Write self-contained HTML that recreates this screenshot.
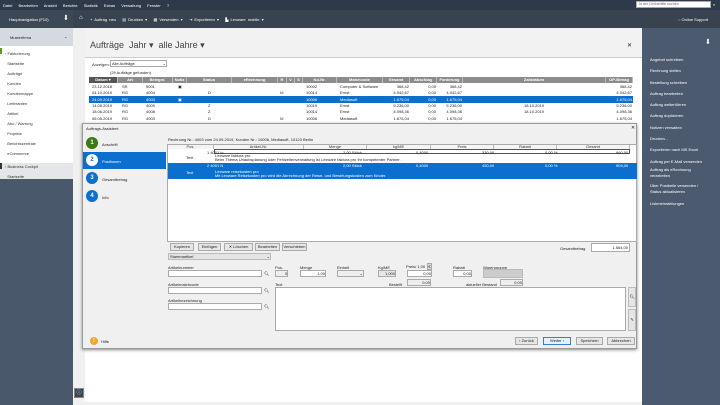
<!DOCTYPE html><html><head><meta charset="utf-8"><style>
*{margin:0;padding:0;box-sizing:border-box}
body{width:720px;height:405px;overflow:hidden;position:relative;background:#f0f0f0;font-family:"Liberation Sans",sans-serif;font-size:4px;color:#222}
.a{position:absolute;white-space:nowrap}
.w{color:#fff}
.row div,.hd div{position:absolute;top:0;height:100%;padding:0 1px;overflow:hidden;white-space:nowrap}
.hd{position:absolute;background:#8c8c8c;color:#fff;font-weight:bold}
.hd div{border-right:1px solid #bbb;text-align:center}
.row{position:absolute;height:6px;line-height:6px}
.r{text-align:right}
.in{position:absolute;background:#fff;border:1px solid #aaa;line-height:5px;font-size:4px}
.btn{position:absolute;background:#e6e6e6;border:1px solid #aaa;text-align:center;line-height:6px;height:8px}
.c{position:absolute;border-radius:50%;font-weight:bold;font-size:6px;text-align:center;width:12px;height:12px;line-height:12px}
</style></head><body>
<!-- menu bar -->
<div class="a" style="left:0;top:0;width:720px;height:10px;background:#2e3a4a"></div>
<div class="a w" style="left:3px;top:3px;word-spacing:5px">Datei Bearbeiten Ansicht Berichte Statistik Extras Verwaltung Fenster ?</div>
<div class="in" style="left:636px;top:1px;width:75px;height:7px;font-size:3.6px;color:#666;padding-left:2px">In der Onlinehilfe suchen</div>
<div class="a w" style="left:713px;top:2px">⌕</div>
<!-- toolbar -->
<div class="a" style="left:0;top:10px;width:720px;height:18px;background:#38434f"></div>
<div class="a" style="left:0;top:10px;width:73px;height:18px;background:#3d4856"></div>
<div class="a w" style="left:9px;top:17px">Hauptnavigation (F10)</div>
<div class="a w" style="left:63px;top:14px;font-size:7px">⬇</div>
<div class="a w" style="left:79px;top:15px;font-size:6px">⌂</div>
<div class="a w" style="left:90px;top:17px;word-spacing:1px">+ Auftrag neu &nbsp; ▤ Drucken ▾ &nbsp; ▦ Versenden ▾ &nbsp; ⇥ Exportieren ▾ &nbsp; ▙ Lexware mobile ▾</div>
<div class="a w" style="left:678px;top:17px">◌ Online Support</div>
<!-- left sidebar -->
<div class="a" style="left:0;top:28px;width:73px;height:377px;background:#4a586c"></div>
<div class="a" style="left:0;top:28px;width:73px;height:18px;background:#d5dae1"></div>
<div class="a" style="left:10px;top:35px">Musterfirma</div><div class="a" style="left:64px;top:34px">⌄</div>
<div class="a" style="left:0;top:46px;width:73px;height:117px;background:#fff"></div>
<div class="a" style="left:0;top:48px;width:2px;height:6px;background:#5a9a2a"></div>
<div class="a" style="left:5px;top:49px;line-height:10px;color:#333">› Fakturierung<br>&nbsp;&nbsp;Startseite<br>&nbsp;&nbsp;Aufträge<br>&nbsp;&nbsp;Kunden<br>&nbsp;&nbsp;Kundenmappe<br>&nbsp;&nbsp;Lieferanten<br>&nbsp;&nbsp;Artikel<br>&nbsp;&nbsp;Abo / Wartung<br>&nbsp;&nbsp;Projekte<br>&nbsp;&nbsp;Berichtszentrale<br>&nbsp;&nbsp;eCommerce</div>
<div class="a" style="left:0;top:163px;width:73px;height:16px;background:#e4e6e9"></div>
<div class="a" style="left:0;top:163px;width:2px;height:6px;background:#333"></div>
<div class="a" style="left:5px;top:162px;line-height:10px;color:#333">› Business Cockpit<br>&nbsp;&nbsp;Startseite</div>
<div class="a" style="left:74px;top:388px;width:10px;height:10px;background:#38434f;border:1px solid #888;color:#fff;text-align:center;line-height:8px;font-size:5px">ⓘ</div>
<!-- main -->
<div class="a" style="left:85px;top:28px;width:557px;height:374px;background:#fff"></div>
<div class="a" style="left:85px;top:28px;width:557px;height:30px;background:#f2f2f2;border-bottom:1px solid #ccc"></div>
<div class="a" style="left:90px;top:40px;font-size:9px;color:#444">Aufträge &nbsp;Jahr ▾ &nbsp;alle Jahre ▾</div>
<div class="a" style="left:627px;top:42px;font-size:6px">✕</div>
<div class="a" style="left:92px;top:62px">Anzeigen:</div>
<div class="in" style="left:110px;top:60px;width:57px;height:7px;padding-left:1px">Alle Aufträge<span style="float:right">⌄</span></div>
<div class="a" style="left:110px;top:70px">(29 Aufträge gefunden)</div>
<div class="hd" style="left:89px;top:77px;width:544px;height:6px;line-height:6px">
<div style="left:0;width:29px;background:#555">Datum ▾</div><div style="left:29px;width:25px">Art</div><div style="left:54px;width:30px">Belegnr.</div><div style="left:84px;width:14px">Notiz</div><div style="left:98px;width:45px">Status</div><div style="left:143px;width:46px">eRechnung</div><div style="left:189px;width:9px">R</div><div style="left:198px;width:8px">V</div><div style="left:206px;width:8px">S</div><div style="left:214px;width:34px">Kd-Nr.</div><div style="left:248px;width:46px">Matchcode</div><div style="left:294px;width:27px">Gesamt</div><div style="left:321px;width:27px">Abschlag</div><div style="left:348px;width:26px">Forderung</div><div style="left:374px;width:143px">Zahldatum</div><div style="left:517px;width:27px">OP-Betrag</div></div>
<div class="a" style="left:89px;top:96px;width:544px;height:6.5px;background:#0a6fcf"></div>
<div class="a" style="left:89px;top:83px;width:544px">
<div class="row" style="top:1px;width:544px"><div style="left:2px">23.12.2018</div><div style="left:32px">SR</div><div style="left:56px">5001</div><div style="left:88px">▣</div><div style="left:216px">10002</div><div style="left:250px">Computer &amp; Software</div><div class="r" style="left:294px;width:27px">368,42</div><div class="r" style="left:321px;width:27px">0,00</div><div class="r" style="left:348px;width:26px">368,42</div><div class="r" style="left:517px;width:27px">368,42</div></div>
<div class="row" style="top:7.3px;width:544px"><div style="left:2px">04.10.2019</div><div style="left:32px">RG</div><div style="left:56px">4004</div><div style="left:118px">D</div><div style="left:190px">⛁</div><div style="left:216px">10014</div><div style="left:250px">Ernst</div><div class="r" style="left:294px;width:27px">4.042,67</div><div class="r" style="left:321px;width:27px">0,00</div><div class="r" style="left:348px;width:26px">4.042,67</div><div class="r" style="left:517px;width:27px">4.042,67</div></div>
<div class="row w" style="top:13.6px;width:544px"><div style="left:2px">24.09.2019</div><div style="left:32px">RG</div><div style="left:56px">4003</div><div style="left:88px">▣</div><div style="left:216px">10006</div><div style="left:250px">Mediasoft</div><div class="r" style="left:294px;width:27px">1.675,04</div><div class="r" style="left:321px;width:27px">0,00</div><div class="r" style="left:348px;width:26px">1.675,04</div><div class="r" style="left:517px;width:27px">1.675,04</div></div>
<div class="row" style="top:19.9px;width:544px"><div style="left:2px">14.08.2019</div><div style="left:32px">RG</div><div style="left:56px">4009</div><div style="left:118px">Z</div><div style="left:216px">10019</div><div style="left:250px">Ernst</div><div class="r" style="left:294px;width:27px">5.236,00</div><div class="r" style="left:321px;width:27px">0,00</div><div class="r" style="left:348px;width:26px">5.236,00</div><div style="left:434px">18.10.2019</div><div class="r" style="left:517px;width:27px">5.236,00</div></div>
<div class="row" style="top:26.2px;width:544px"><div style="left:2px">18.06.2019</div><div style="left:32px">RG</div><div style="left:56px">4008</div><div style="left:118px">Z</div><div style="left:216px">10014</div><div style="left:250px">Ernst</div><div class="r" style="left:294px;width:27px">4.098,36</div><div class="r" style="left:321px;width:27px">0,00</div><div class="r" style="left:348px;width:26px">4.098,36</div><div style="left:434px">18.10.2019</div><div class="r" style="left:517px;width:27px">4.098,36</div></div>
<div class="row" style="top:32.5px;width:544px"><div style="left:2px">06.05.2019</div><div style="left:32px">RG</div><div style="left:56px">4003</div><div style="left:118px">D</div><div style="left:190px">⛁</div><div style="left:216px">10006</div><div style="left:250px">Mediasoft</div><div class="r" style="left:294px;width:27px">1.675,04</div><div class="r" style="left:321px;width:27px">0,00</div><div class="r" style="left:348px;width:26px">1.675,04</div><div class="r" style="left:517px;width:27px">1.675,04</div></div>
</div>
<!-- right sidebar -->
<div class="a" style="left:642px;top:28px;width:78px;height:377px;background:#4b5a6f"></div>
<div class="a w" style="left:705px;top:38px;font-size:7px">⬇</div>
<div class="a w" style="left:650px;top:54px;line-height:11.3px">Angebot schreiben<br>Rechnung stellen<br>Bestellung schreiben<br>Auftrag bearbeiten<br>Auftrag weiterführen<br>Auftrag duplizieren<br>Notizen verwalten<br>Drucken...<br>Exportieren nach MS Excel<br>Auftrag per E-Mail versenden</div>
<div class="a w" style="left:650px;top:167px;line-height:5.5px">Auftrag als eRechnung<br>verarbeiten</div>
<div class="a w" style="left:650px;top:183px;line-height:5.5px">Über Postbelle versenden /<br>Status aktualisieren</div>
<div class="a w" style="left:650px;top:201px">Listeneinstellungen</div>
<!-- dialog -->
<div class="a" style="left:82px;top:123px;width:555px;height:226px;background:#f0f0f0;border:1px solid #999;box-shadow:0 1px 3px #888"></div>
<div class="a" style="left:86px;top:126px">Auftrags-Assistent</div>
<div class="a" style="left:631px;top:125px;font-size:5px">✕</div>
<div class="a" style="left:83px;top:152px;width:83px;height:17px;background:#0a6fcf"></div>
<div class="c" style="left:86px;top:137px;background:#3d7a12;color:#fff">1</div>
<div class="c" style="left:86px;top:154px;background:#fff;color:#0a6fcf">2</div>
<div class="c" style="left:86px;top:172px;background:#0a6fcf;color:#fff">3</div>
<div class="c" style="left:86px;top:190px;background:#0a6fcf;color:#fff">4</div>
<div class="a" style="left:102px;top:142px">Anschrift</div><div class="a w" style="left:102px;top:159px">Positionen</div><div class="a" style="left:102px;top:177px">Gesamtbetrag</div><div class="a" style="left:102px;top:195px">Info</div>
<div class="a" style="left:168px;top:137px">Rechnung Nr.: 4003 vom 24.09.2019, Kunden Nr.: 10006, Mediasoft, 10123 Berlin</div>
<div class="a" style="left:167px;top:144px;width:470px;height:98px;background:#fff;border:1px solid #aaa"></div>
<div class="hd" style="left:168px;top:145px;width:462px;height:4px;line-height:4px;background:#f4f4f4;color:#333;font-weight:normal">
<div style="left:0;width:46px">Pos.</div><div style="left:46px;width:90px">Artikel-Nr.</div><div style="left:136px;width:63px">Menge</div><div style="left:199px;width:64px">kg/ME</div><div style="left:263px;width:63px">Preis</div><div style="left:326px;width:63px">Rabatt</div><div style="left:389px;width:73px">Gesamt</div></div>
<div class="a" style="left:214px;top:149px;width:416px;height:5px;border:1px solid #555"></div>
<div class="a" style="left:207px;top:149.5px">1 4001 Ic</div><div class="a" style="left:343px;top:149.5px">2,00 Stück</div><div class="a" style="left:416px;top:149.5px">0,4000</div><div class="a" style="left:482px;top:149.5px">330,00</div><div class="a" style="left:545px;top:149.5px">0,00 %</div><div class="a" style="left:616px;top:149.5px">660,00</div>
<div class="a" style="left:186px;top:155px">Text</div><div class="a" style="left:215px;top:154px;line-height:4.3px">Lexware faktura pro<br>Beim Thema Urlaubsplanung oder Fehlzeitenverwaltung ist Lexware faktura pro Ihr kompetenter Partner.</div>
<div class="a" style="left:168px;top:163px;width:469px;height:16px;background:#0a6fcf"></div>
<div class="a w" style="left:207px;top:163px">2 4001 N</div><div class="a w" style="left:343px;top:163px">2,00 Stück</div><div class="a w" style="left:416px;top:163px">0,4000</div><div class="a w" style="left:482px;top:163px">450,00</div><div class="a w" style="left:545px;top:163px">0,00 %</div><div class="a w" style="left:616px;top:163px">904,00</div>
<div class="a w" style="left:186px;top:170px">Text</div><div class="a w" style="left:215px;top:170px;line-height:4.3px">Lexware reisekosten pro<br>Mit Lexware Reisekosten pro wird die Abrechnung der Reise- und Bewirtungskosten zum Kinder.</div>
<div class="btn" style="left:170px;top:243px;width:24px">Kopieren</div><div class="btn" style="left:198px;top:243px;width:23px">Einfügen</div><div class="btn" style="left:224px;top:243px;width:29px">✕ Löschen</div><div class="btn" style="left:255px;top:243px;width:25px">Bearbeiten</div><div class="btn" style="left:282px;top:243px;width:25px">Verschieben</div>
<div class="a" style="left:560px;top:246px">Gesamtbetrag</div><div class="in" style="left:591px;top:243px;width:39px;height:9px;text-align:right;line-height:7px;padding-right:1px">1.564,00</div>
<div class="a" style="left:168px;top:253px;width:103px;height:7px;background:#e4e4e4;border:1px solid #bbb;line-height:5px;padding-left:1px">Stammartikel<span style="float:right">⌄</span></div>
<div class="a" style="left:168px;top:265px">Artikelnummer</div><div class="in" style="left:168px;top:270px;width:94px;height:7px"></div><div class="a" style="left:264px;top:271px">🔍︎</div>
<div class="a" style="left:168px;top:282px">Artikelmatchcode</div><div class="in" style="left:168px;top:287px;width:94px;height:7px"></div><div class="a" style="left:264px;top:288px">🔍︎</div>
<div class="a" style="left:168px;top:298px">Artikelbezeichnung</div><div class="in" style="left:168px;top:303px;width:94px;height:7px"></div><div class="a" style="left:264px;top:304px">🔍︎</div>
<div class="a" style="left:275px;top:265px">Pos.</div><div class="in" style="left:275px;top:270px;width:13px;height:7px;background:#eee;text-align:right">3</div>
<div class="a" style="left:300px;top:265px">Menge</div><div class="in" style="left:300px;top:270px;width:26px;height:7px;text-align:right">1,00</div>
<div class="a" style="left:337px;top:265px">Einheit</div><div class="in" style="left:337px;top:270px;width:27px;height:7px;background:#eee;text-align:right">⌄</div>
<div class="a" style="left:378px;top:265px">Kg/ME</div><div class="in" style="left:378px;top:270px;width:18px;height:7px;background:#e8e8e8;text-align:right">1,000</div>
<div class="a" style="left:406px;top:264px">Preis/ 1,00 &nbsp;<span style="border:1px solid #aaa;background:#ddd">€</span></div><div class="in" style="left:407px;top:270px;width:25px;height:7px;text-align:right">0,00</div>
<div class="a" style="left:453px;top:265px">Rabatt</div><div class="in" style="left:453px;top:270px;width:19px;height:7px;text-align:right">0,00</div>
<div class="a" style="left:483px;top:265px">Warengruppe</div><div class="a" style="left:483px;top:269px;width:40px;height:9px;background:#ccc;border:1px solid #bbb"></div>
<div class="a" style="left:275px;top:282px">Text</div>
<div class="a" style="left:389px;top:282px">Bestellt</div><div class="in" style="left:407px;top:279px;width:24px;height:7px;background:#eee;text-align:right">0,00</div>
<div class="a" style="left:466px;top:282px">aktueller Bestand</div><div class="in" style="left:500px;top:279px;width:23px;height:7px;background:#eee;text-align:right">0,00</div>
<div class="in" style="left:275px;top:287px;width:351px;height:44px"></div>
<div class="a" style="left:628px;top:287px;width:8px;height:20px;background:#e6e6e6;border:1px solid #bbb;text-align:center;line-height:18px">🔍︎</div>
<div class="a" style="left:628px;top:309px;width:8px;height:22px;background:#e6e6e6;border:1px solid #bbb;text-align:center;line-height:20px">✎</div>
<div class="c" style="left:90px;top:337px;width:8px;height:8px;line-height:8px;font-size:5px;background:#f2a52a;color:#fff">!</div>
<div class="a" style="left:101px;top:339px">Hilfe</div>
<div class="btn" style="left:515px;top:337px;width:23px">‹ Zurück</div>
<div class="btn" style="left:543px;top:337px;width:28px;border-color:#3a7bd5;background:#e5f1fb">Weiter ›</div>
<div class="btn" style="left:576px;top:337px;width:27px">Speichern</div>
<div class="btn" style="left:607px;top:337px;width:28px">Abbrechen</div>
</body></html>
